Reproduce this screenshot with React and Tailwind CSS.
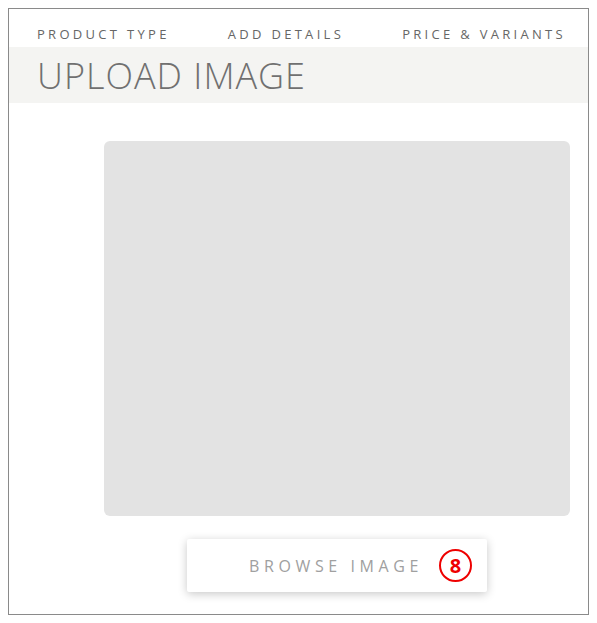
export default function App() {
  return (
    <div className="w-[597px] h-[623px] bg-white pt-[8px] pl-[8px]" style={{ fontFamily: '"Open Sans", sans-serif' }}>
      <div className="w-[581px] h-[607px] border border-[#8a8a8a] flex flex-col">
        <div className="h-[38px] flex items-end justify-between pl-[28px] pr-[20px] pb-[6px] text-[13px] tracking-[3.3px] text-[#666] leading-none">
          <span>PRODUCT TYPE</span>
          <span>ADD DETAILS</span>
          <span className="mr-[2px]">PRICE &amp; VARIANTS</span>
        </div>
        <div className="h-[56px] bg-[#f4f4f2] flex items-center pl-[28px] pt-[2px]">
          <span className="text-[36px] font-light tracking-[1px] text-[#707070] leading-none">UPLOAD IMAGE</span>
        </div>
        <div className="mt-[38px] ml-[95px] w-[466px] h-[375px] rounded-[6px] bg-[#e3e3e3]" />
        <div className="mt-[23px] ml-[178px] w-[300px] h-[53px] bg-white rounded-[2px] shadow-[0_2px_10px_rgba(0,0,0,0.22)] flex items-center justify-end pr-[15px]">
          <span className="text-[16px] tracking-[4.6px] text-[#a0a0a0] mr-[16px]">BROWSE IMAGE</span>
          <span className="w-[33px] h-[33px] rounded-full border-2 border-[#e00] text-[#e00] font-bold text-[20px] flex items-center justify-center leading-none">8</span>
        </div>
      </div>
    </div>
  );
}
